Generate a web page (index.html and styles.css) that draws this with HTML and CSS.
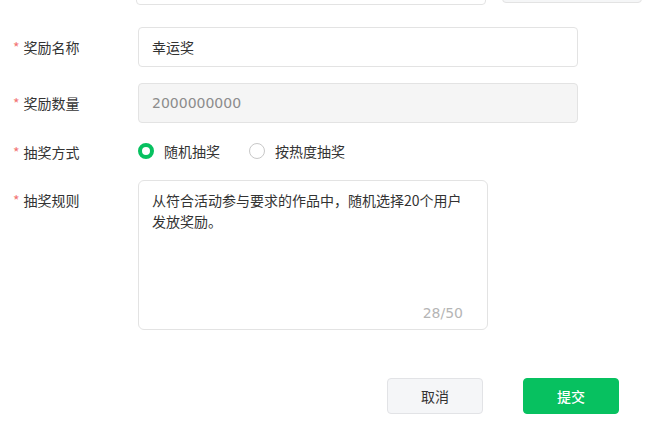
FILE: index.html
```html
<!DOCTYPE html>
<html lang="zh-CN">
<head>
<meta charset="utf-8">
<link rel="stylesheet" href="styles.css">
</head>
<body>
<div class="page">
  <div class="top-row">
    <div class="top-field"></div>
    <div class="top-btn"></div>
  </div>
  <div class="form">
    <div class="row row-input">
      <div class="label"><span class="req">*</span>奖励名称</div>
      <div class="input">幸运奖</div>
    </div>
    <div class="row row-input">
      <div class="label"><span class="req">*</span>奖励数量</div>
      <div class="input disabled num">2000000000</div>
    </div>
    <div class="row row-radio">
      <div class="label"><span class="req">*</span>抽奖方式</div>
      <div class="radios">
        <label class="radio"><span class="dot checked"></span>随机抽奖</label>
        <label class="radio"><span class="dot"></span>按热度抽奖</label>
      </div>
    </div>
    <div class="row row-area">
      <div class="label label-area"><span class="req">*</span>抽奖规则</div>
      <div class="area">
        <div class="area-text">从符合活动参与要求的作品中，随机选择20个用户发放奖励。</div>
        <span class="count num">28/50</span>
      </div>
    </div>
  </div>
  <div class="actions">
    <button class="btn btn-cancel">取消</button>
    <button class="btn btn-submit">提交</button>
  </div>
</div>
</body>
</html>
```

FILE: styles.css
```css
* { box-sizing: border-box; }
html, body {
  margin: 0;
  padding: 0;
  background: #fff;
}
body {
  font-family: "Noto Sans CJK SC", "Noto Sans", sans-serif;
  font-size: 14px;
  color: #333;
  width: 662px;
  height: 432px;
  overflow: hidden;
}
.page {
  padding-left: 13px;
}
.top-row {
  height: 5px;
  display: flex;
  align-items: flex-end;
  overflow: hidden;
  padding-left: 123px;
}
.top-field {
  flex: none;
  width: 350px;
  height: 40px;
  border: 1px solid #e3e3e3;
  border-radius: 4px;
  background: #fff;
}
.top-btn {
  flex: none;
  width: 140px;
  height: 40px;
  margin-left: 16px;
  margin-bottom: 2px;
  border: 1px solid #e3e3e3;
  border-radius: 4px;
  background: #f5f6f7;
}
.form {
  margin-top: 22px;
  display: flex;
  flex-direction: column;
  gap: 16px;
}
.row {
  display: flex;
  align-items: center;
}
.label {
  flex: none;
  width: 125px;
  color: #333;
  line-height: 20px;
}
.req {
  color: #f27474;
  margin-right: 4px;
}
.input {
  width: 440px;
  height: 40px;
  border: 1px solid #e3e3e3;
  border-radius: 4px;
  padding: 0 13px;
  line-height: 38px;
  color: #333;
  background: #fff;
}
.input.disabled {
  background: #f5f5f5;
  color: #8c8c8c;
}
.num {
  font-family: "DejaVu Sans", "Noto Sans CJK SC", sans-serif;
  letter-spacing: 0;
}
.row-radio {
  height: 25px;
}
.radios {
  display: flex;
  align-items: center;
  gap: 29px;
  margin-top: -2px;
}
.radio {
  display: flex;
  align-items: center;
  gap: 10px;
  color: #333;
  line-height: 20px;
}
.dot {
  width: 16px;
  height: 16px;
  border-radius: 50%;
  border: 1px solid #c8c8c8;
  background: #fff;
}
.dot.checked {
  border: 4px solid #07c160;
}
.row-area {
  align-items: flex-start;
}
.label-area {
  padding-top: 10px;
}
.area {
  position: relative;
  width: 350px;
  height: 150px;
  border: 1px solid #e3e3e3;
  border-radius: 6px;
  padding: 9px 20px 0 13px;
  background: #fff;
}
.area-text {
  line-height: 21px;
  color: #333;
}
.count {
  position: absolute;
  right: 24px;
  bottom: 6px;
  color: #b5b5b5;
  line-height: 20px;
}
.actions {
  display: flex;
  justify-content: flex-end;
  gap: 40px;
  margin-top: 48px;
  padding-right: 43px;
}
.btn {
  width: 96px;
  height: 36px;
  border-radius: 4px;
  font-family: "Noto Sans CJK SC", "Noto Sans", sans-serif;
  font-size: 14px;
  cursor: pointer;
}
.btn-cancel {
  background: #f5f6f8;
  border: 1px solid #e2e3e6;
  color: #333;
}
.btn-submit {
  background: #07c160;
  border: 1px solid #07c160;
  color: #fff;
  font-weight: 500;
}
```
